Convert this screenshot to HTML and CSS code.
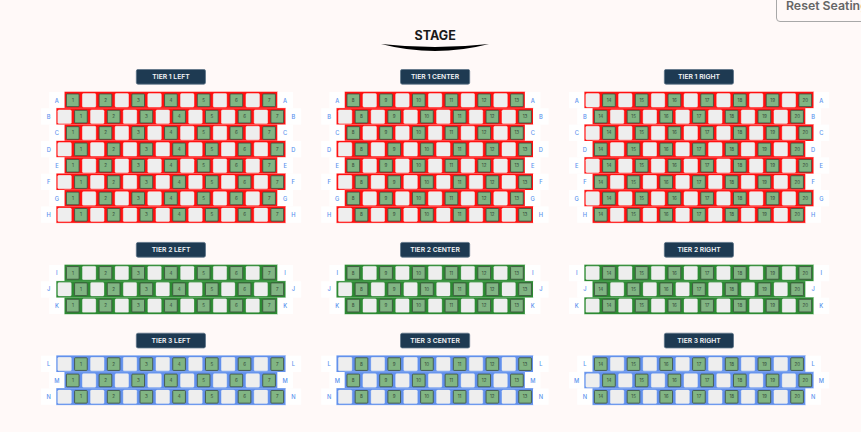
FILE: index.html
```html
<!DOCTYPE html>
<html lang="en">
<head>
<meta charset="utf-8">
<title>Seating</title>
<link rel="stylesheet" href="styles.css">
</head>
<body>
<button class="reset">Reset Seating</button>
<main class="hall">
  <div class="stage">
    <div class="stage-name">STAGE</div>
    <svg class="stage-arc" width="108" height="9" viewBox="0 0 108 9"><path d="M0 1Q54 7 108 1Q54 15 0 1Z" fill="#000"/></svg>
  </div>
  <div class="blocks" id="blocks"></div>
</main>
<script src="script.js"></script>
</body>
</html>
```

FILE: styles.css
```css
* { box-sizing: border-box; }
html, body { margin: 0; height: 100%; overflow: hidden; }
body { background: #fff9f8; font-family: Inter, "Liberation Sans", sans-serif; position: relative; }
.reset {
  position: absolute; left: 776px; top: -12px; width: 110px; height: 34px;
  padding: 0 0 0 9px; text-align: left; white-space: nowrap;
  background: #fff9f8; border: 1px solid #a8a8a8; border-radius: 4px;
  font: 600 12.3px Inter, sans-serif; color: #666;
}
.hall { width: 792px; margin-left: 39.2px; padding-top: 28.5px; }
.stage { display: flex; flex-direction: column; align-items: center; }
.stage-name { font-size: 12.5px; font-weight: 700; line-height: 13px; color: #1a1a1a; }
.stage-arc { display: block; margin-top: 1px; }
.blocks {
  display: grid; grid-template-columns: repeat(3, 645.5px); row-gap: 46.5px; margin-top: 17px; height: 0;
  transform: scale(0.409); transform-origin: 0 0;
}
.block { display: flex; flex-direction: column; align-items: center; }
.title {
  width: 171px; height: 38px; margin-bottom: 18px; display: flex; align-items: center; justify-content: center;
  background: #1e3a52; border: 2px solid #5b7286; border-radius: 5px;
  color: #f4f6f8; font-size: 16.5px; font-weight: 600; white-space: nowrap;
}
.row { display: flex; justify-content: center; height: 40px; }
.label {
  width: 38px; display: flex; align-items: center; justify-content: center;
  background: #fff; color: #5b93ee; font-size: 14px; font-weight: 500;
}
.seats { display: flex; background: var(--tier); box-shadow: 0 0 0 1px var(--edge); }
.seat { width: 40px; height: 40px; padding: 3.5px; font-size: 11px; color: #34483a; }
.seat i { display: block; width: 100%; height: 100%; border-radius: 3px; }
.seat.free i { background: #eeeeee; box-shadow: 0 0 0 1px var(--soft); }
.seat.taken i {
  background: #81b583; border: 2px solid #3d4f3e; display: flex; align-items: center; justify-content: center;
  font-style: normal;
}
.red { --tier: #ff1010; --edge: #ff9a9a; --soft: #ff8a8a; }
.green { --tier: #2c8a32; --edge: #8cc48f; --soft: #6aa86e; }
.blue { --tier: #6290ec; --edge: #a4c0f4; --soft: #a8c2f2; }
```

FILE: script.js
```js
var tiers = [
  { name: 'TIER 1', tone: 'red', rows: 'ABCDEFGH', leftStartsGreen: true },
  { name: 'TIER 2', tone: 'green', rows: 'IJK', leftStartsGreen: true },
  { name: 'TIER 3', tone: 'blue', rows: 'LMN', leftStartsGreen: false }
];
var parts = [
  { name: 'LEFT', from: 1, to: 7, flip: false },
  { name: 'CENTER', from: 8, to: 13, flip: false },
  { name: 'RIGHT', from: 14, to: 20, flip: true }
];
var host = document.getElementById('blocks');

function add(parent, cls, text) {
  var el = document.createElement('div');
  el.className = cls;
  if (text !== undefined) el.textContent = text;
  parent.appendChild(el);
  return el;
}

function addSeat(parent, num) {
  var seat = add(parent, 'seat ' + (num ? 'taken' : 'free'));
  var inner = document.createElement('i');
  if (num) inner.textContent = num;
  seat.appendChild(inner);
}

tiers.forEach(function (tier) {
  parts.forEach(function (part) {
    var block = add(host, 'block ' + tier.tone);
    add(block, 'title', tier.name + ' ' + part.name);
    tier.rows.split('').forEach(function (letter, index) {
      var greenFirst = (index % 2 === 0) === (tier.leftStartsGreen !== part.flip);
      var row = add(block, 'row');
      add(row, 'label', letter);
      var seats = add(row, 'seats');
      for (var n = part.from; n <= part.to; n++) {
        if (!greenFirst) addSeat(seats, 0);
        addSeat(seats, n);
        if (greenFirst && n < part.to) addSeat(seats, 0);
      }
      add(row, 'label', letter);
    });
  });
});
```
